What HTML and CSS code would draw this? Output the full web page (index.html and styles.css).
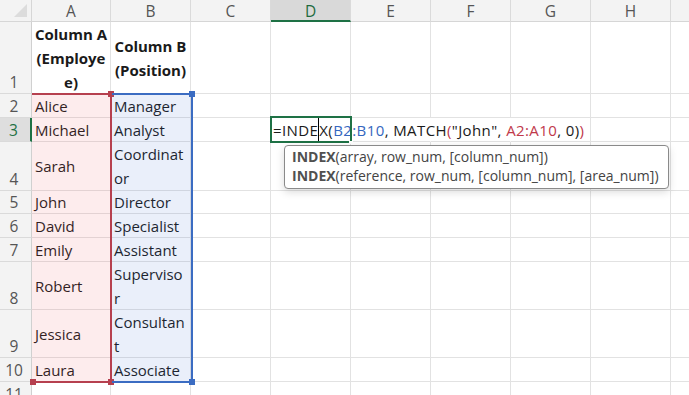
FILE: index.html
```html
<!DOCTYPE html>
<html>
<head>
<meta charset="utf-8">
<link rel="stylesheet" href="styles.css">
</head>
<body>
<div class="sheet">
  <div class="grid">
    <!-- header row -->
    <div class="corner"><span class="tri"></span></div>
    <div class="ch">A</div>
    <div class="ch">B</div>
    <div class="ch">C</div>
    <div class="ch sel">D</div>
    <div class="ch">E</div>
    <div class="ch">F</div>
    <div class="ch">G</div>
    <div class="ch">H</div>
    <div class="ch"></div>

    <!-- row 1 -->
    <div class="rh">1</div>
    <div class="c hd">Column A<br>(Employe<br>e)</div>
    <div class="c hd">Column B<br>(Position)</div>
    <div class="c"></div><div class="c"></div><div class="c"></div><div class="c"></div><div class="c"></div><div class="c"></div><div class="c"></div>

    <!-- row 2 -->
    <div class="rh">2</div>
    <div class="c">Alice</div>
    <div class="c">Manager</div>
    <div class="c"></div><div class="c"></div><div class="c"></div><div class="c"></div><div class="c"></div><div class="c"></div><div class="c"></div>

    <!-- row 3 -->
    <div class="rh selrow">3</div>
    <div class="c">Michael</div>
    <div class="c">Analyst</div>
    <div class="c"></div>
    <div class="c formula nob"><span class="k">=INDE</span><span class="caret"></span><span class="k">X(</span><span class="blue">B2:B10</span><span class="k">, MATCH</span><span class="red">(</span><span class="k">"John", </span><span class="red">A2:A10</span><span class="k">, 0)</span><span class="red">)</span></div>
    <div class="c nob"></div><div class="c nob"></div><div class="c"></div><div class="c"></div><div class="c"></div>

    <!-- row 4 -->
    <div class="rh">4</div>
    <div class="c">Sarah</div>
    <div class="c">Coordinat<br>or</div>
    <div class="c"></div><div class="c"></div><div class="c"></div><div class="c"></div><div class="c"></div><div class="c"></div><div class="c"></div>

    <!-- row 5 -->
    <div class="rh">5</div>
    <div class="c">John</div>
    <div class="c">Director</div>
    <div class="c"></div><div class="c"></div><div class="c"></div><div class="c"></div><div class="c"></div><div class="c"></div><div class="c"></div>

    <!-- row 6 -->
    <div class="rh">6</div>
    <div class="c">David</div>
    <div class="c">Specialist</div>
    <div class="c"></div><div class="c"></div><div class="c"></div><div class="c"></div><div class="c"></div><div class="c"></div><div class="c"></div>

    <!-- row 7 -->
    <div class="rh">7</div>
    <div class="c">Emily</div>
    <div class="c">Assistant</div>
    <div class="c"></div><div class="c"></div><div class="c"></div><div class="c"></div><div class="c"></div><div class="c"></div><div class="c"></div>

    <!-- row 8 -->
    <div class="rh">8</div>
    <div class="c">Robert</div>
    <div class="c">Superviso<br>r</div>
    <div class="c"></div><div class="c"></div><div class="c"></div><div class="c"></div><div class="c"></div><div class="c"></div><div class="c"></div>

    <!-- row 9 -->
    <div class="rh">9</div>
    <div class="c">Jessica</div>
    <div class="c">Consultan<br>t</div>
    <div class="c"></div><div class="c"></div><div class="c"></div><div class="c"></div><div class="c"></div><div class="c"></div><div class="c"></div>

    <!-- row 10 -->
    <div class="rh">10</div>
    <div class="c">Laura</div>
    <div class="c">Associate</div>
    <div class="c"></div><div class="c"></div><div class="c"></div><div class="c"></div><div class="c"></div><div class="c"></div><div class="c"></div>

    <!-- row 11 -->
    <div class="rh">11</div>
    <div class="c"></div><div class="c"></div><div class="c"></div><div class="c"></div><div class="c"></div><div class="c"></div><div class="c"></div><div class="c"></div><div class="c"></div>
  </div>

  <!-- overlays: reference ranges, selection, tooltip -->
  <div class="range range-a"><span class="h h-tr"></span><span class="h h-bl"></span><span class="h h-br"></span></div>
  <div class="range range-b"><span class="h h-tr"></span><span class="h h-br"></span></div>
  <div class="selcell"><span class="fillgap"></span></div>
  <div class="tip">
    <div class="tipline"><b>INDEX</b>(array, row_num, [column_num])</div>
    <div class="tipline"><b>INDEX</b>(reference, row_num, [column_num], [area_num])</div>
  </div>
</div>
</body>
</html>
```

FILE: styles.css
```css
html, body {
  margin: 0;
  padding: 0;
  background: #ffffff;
  overflow: hidden;
}

.sheet {
  position: relative;
  width: 689px;
  height: 395px;
  overflow: hidden;
  font-family: "Open Sans", "Liberation Sans", sans-serif;
}

.grid {
  display: grid;
  grid-template-columns: 32px 79px 80px 80px 80px 80px 80px 80px 80px 80px;
  grid-template-rows: 22px 72px 24px 24px 49px 23px 24px 24px 48px 48px 24px 24px;
}

.corner {
  background: #f3f3f3;
  border-right: 1px solid #d6d6d6;
  border-bottom: 1px solid #d6d6d6;
  box-sizing: border-box;
  position: relative;
}
.tri {
  position: absolute;
  right: 4px;
  bottom: 4px;
  width: 0;
  height: 0;
  border-left: 13px solid transparent;
  border-bottom: 13px solid #dcdcdc;
}

.ch {
  background: #f3f3f3;
  border-right: 1px solid #dadada;
  border-bottom: 1px solid #d6d6d6;
  box-sizing: border-box;
  display: flex;
  align-items: center;
  justify-content: center;
  font-size: 15.5px;
  color: #555555;
  padding-top: 1px;
}
.ch.sel {
  background: #d9d9d9;
  border-bottom: 2px solid #1e7145;
  color: #1e6b40;
}

.rh {
  background: #f3f3f3;
  border-right: 1px solid #d0d0d0;
  border-bottom: 1px solid #dadada;
  box-sizing: border-box;
  display: flex;
  align-items: flex-end;
  justify-content: center;
  font-size: 15.5px;
  line-height: 22px;
  color: #555555;
  padding-right: 3px;
}
.rh.selrow {
  background: #dedede;
  color: #1e7145;
  border-right: 2px solid #1e7145;
}

.c {
  border-right: 1px solid #e2e2e2;
  border-bottom: 1px solid #e2e2e2;
  box-sizing: border-box;
  display: flex;
  flex-direction: column;
  justify-content: center;
  padding: 0 2px 0 3px;
  font-size: 15px;
  line-height: 24px;
  color: #1a1a1a;
  white-space: nowrap;
}
.c.hd {
  font-weight: 700;
  text-align: center;
  align-items: center;
  padding: 0;
  font-size: 15px;
}
.c.nob {
  border-right-color: transparent;
}

.formula {
  display: block;
  position: relative;
  overflow: visible;
  padding-left: 2px;
  z-index: 2;
  color: #1a1a1a;
  letter-spacing: 0.4px;
}
.formula .blue { color: #3567c0; }
.formula .red { color: #c0394b; }
.caret {
  display: inline-block;
  width: 1px;
  height: 24px;
  background: #000;
  vertical-align: top;
  margin: -1px 0 0 0;
}

/* reference range overlays */
.range {
  position: absolute;
  box-sizing: border-box;
  pointer-events: none;
}
.range-a {
  left: 32px;
  top: 93px;
  width: 80px;
  height: 290px;
  background: rgba(240, 80, 90, 0.11);
  border: 2px solid #b6404f;
  border-left: none;
}
.range-b {
  left: 112px;
  top: 93px;
  width: 81px;
  height: 290px;
  background: rgba(60, 110, 210, 0.11);
  border: 2px solid #3b6cc2;
  border-left: none;
}
.h {
  position: absolute;
  width: 6px;
  height: 6px;
}
.range-a .h { background: #b6404f; }
.range-b .h { background: #3b6cc2; }
.h-tr { right: -4px; top: -4px; }
.h-br { right: -4px; bottom: -4px; }
.h-bl { left: -2px; bottom: -4px; }

.selcell {
  position: absolute;
  left: 270px;
  top: 116px;
  width: 82px;
  height: 27px;
  box-sizing: border-box;
  border: 2px solid #1e7145;
  z-index: 3;
}
.fillgap {
  position: absolute;
  right: -3px;
  bottom: -3px;
  width: 4px;
  height: 3px;
  background: #ffffff;
}

.tip {
  position: absolute;
  left: 284px;
  top: 145px;
  width: 385px;
  height: 44px;
  box-sizing: border-box;
  background: #ffffff;
  border: 1px solid #8a8a8a;
  border-radius: 4px;
  box-shadow: 0 3px 8px rgba(0, 0, 0, 0.15);
  padding: 1px 0 0 7px;
  z-index: 4;
  display: flex;
  flex-direction: column;
}
.tipline {
  font-size: 14px;
  line-height: 19px;
  color: #444444;
  white-space: nowrap;
}
.tipline b {
  font-weight: 700;
  color: #505050;
}
```
